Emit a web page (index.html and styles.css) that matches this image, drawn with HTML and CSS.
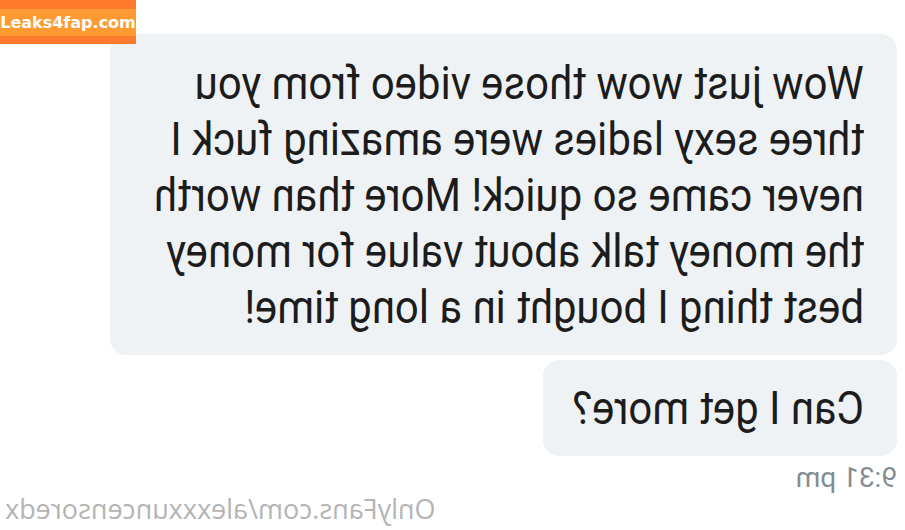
FILE: index.html
```html
<!DOCTYPE html>
<html lang="en">
<head>
    <meta charset="UTF-8">
    <meta name="viewport" content="width=device-width, initial-scale=1.0">
    <title>Messages</title>
    <link rel="stylesheet" href="styles.css">
</head>
<body>
    <div class="badge"><span>Leaks4fap.com</span></div>
    <main class="chat">
        <div class="bubble bubble-long">
            <p class="msg">Wow just wow those video from you<br>three sexy ladies were amazing fuck I<br>never came so quick! More than worth<br>the money talk about value for money<br>best thing I bought in a long time!</p>
        </div>
        <div class="bubble bubble-short">
            <p class="msg">Can I get more?</p>
        </div>
        <div class="time">9:31 pm</div>
        <div class="watermark">OnlyFans.com/alexxxuncensoredx</div>
    </main>
</body>
</html>
```

FILE: styles.css
```css
body {
    margin: 0;
    background: #fff;
    font-family: Roboto, "Liberation Sans", sans-serif;
    width: 905px;
    height: 530px;
    overflow: hidden;
    position: relative;
}
.badge {
    position: absolute;
    top: 0;
    left: 0;
    z-index: 2;
    width: 136px;
    height: 44px;
    background: #ff7a2c;
    display: flex;
    align-items: center;
}
.badge span {
    display: block;
    width: 100%;
    height: 27px;
    line-height: 27px;
    background: #ff9a32;
    color: #fff;
    font-family: "DejaVu Sans", sans-serif;
    font-weight: bold;
    font-size: 16px;
    text-align: center;
}
.chat {
    transform: scaleX(-1);
    display: flex;
    flex-direction: column;
    align-items: flex-start;
    padding: 34px 0 0 8px;
    height: 530px;
    box-sizing: border-box;
}
.bubble {
    background: #eff2f4;
    color: #1c1c1c;
    border-radius: 16px;
    box-sizing: border-box;
}
.msg {
    margin: 0;
    font-size: 46px;
    line-height: 56px;
    white-space: nowrap;
    transform: scaleX(0.91);
    transform-origin: left center;
}
.bubble-long {
    width: 787px;
    padding: 21px 20px 20px 33px;
}
.bubble-short {
    width: 354px;
    margin-top: 5px;
    padding: 20px 20px 20px 33px;
}
.time {
    margin-top: 6px;
    color: #848d93;
    font-size: 28px;
    line-height: 32px;
}
.watermark {
    align-self: flex-end;
    margin-right: 5px;
    color: #b4b4b4;
    font-family: "Open Sans", sans-serif;
    font-size: 27px;
    line-height: 30px;
}
```
